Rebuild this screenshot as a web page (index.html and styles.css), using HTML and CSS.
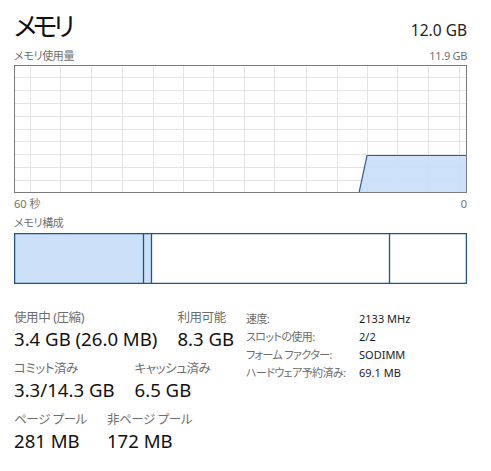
FILE: index.html
```html
<!DOCTYPE html>
<html lang="ja">
  <head>
    <meta charset="UTF-8" />
    <title>メモリ</title>
    <link rel="stylesheet" href="styles.css">
  </head>
  <body>
    <div class="page">
      <div class="header">
        <div class="title">メモリ</div>
        <div class="total">12.0 GB</div>
      </div>

      <div class="caption">
        <span>メモリ使用量</span>
        <span>11.9 GB</span>
      </div>
      <svg class="chart" width="453" height="128" viewBox="0 0 453 128">
        <g stroke="#e3e3e3" stroke-width="1">
          <line x1="16.5" y1="0" x2="16.5" y2="128" />
          <line x1="46.5" y1="0" x2="46.5" y2="128" />
          <line x1="77.5" y1="0" x2="77.5" y2="128" />
          <line x1="108.5" y1="0" x2="108.5" y2="128" />
          <line x1="139.5" y1="0" x2="139.5" y2="128" />
          <line x1="169.5" y1="0" x2="169.5" y2="128" />
          <line x1="199.5" y1="0" x2="199.5" y2="128" />
          <line x1="230.5" y1="0" x2="230.5" y2="128" />
          <line x1="260.5" y1="0" x2="260.5" y2="128" />
          <line x1="292.5" y1="0" x2="292.5" y2="128" />
          <line x1="323.5" y1="0" x2="323.5" y2="128" />
          <line x1="353.5" y1="0" x2="353.5" y2="128" />
          <line x1="383.5" y1="0" x2="383.5" y2="128" />
          <line x1="414.5" y1="0" x2="414.5" y2="128" />
          <line x1="445.5" y1="0" x2="445.5" y2="128" />
          <line x1="0" y1="12.5" x2="453" y2="12.5" />
          <line x1="0" y1="25.5" x2="453" y2="25.5" />
          <line x1="0" y1="38.5" x2="453" y2="38.5" />
          <line x1="0" y1="51.5" x2="453" y2="51.5" />
          <line x1="0" y1="64.5" x2="453" y2="64.5" />
          <line x1="0" y1="76.5" x2="453" y2="76.5" />
          <line x1="0" y1="89.5" x2="453" y2="89.5" />
          <line x1="0" y1="102.5" x2="453" y2="102.5" />
          <line x1="0" y1="115.5" x2="453" y2="115.5" />
        </g>
        <polygon points="345,128 353,90.5 453,90.5 453,128" fill="#c9defa" fill-opacity="0.9" />
        <polyline points="345,128 353,90.5 453,90.5" fill="none" stroke="#2a5f9e" stroke-width="1.2" />
        <rect x="0.5" y="0.5" width="452" height="127" fill="none" stroke="#7b7b7b" />
      </svg>
      <div class="axis">
        <span>60 秒</span>
        <span>0</span>
      </div>

      <div class="caption caption-bar">
        <span>メモリ構成</span>
      </div>
      <svg class="bar" width="453" height="51" viewBox="0 0 453 51">
        <rect x="0" y="0" width="137" height="51" fill="#cce0fa" />
        <g stroke="#1f5487" stroke-width="1.3">
          <line x1="129.5" y1="0" x2="129.5" y2="51" />
          <line x1="137.5" y1="0" x2="137.5" y2="51" />
          <line x1="375.5" y1="0" x2="375.5" y2="51" />
        </g>
        <rect x="0.6" y="0.6" width="451.8" height="49.8" fill="none" stroke="#1f5487" stroke-width="1.3" />
      </svg>

      <div class="stats">
        <div class="stats-main">
          <div class="stat-row">
            <div class="stat">
              <div class="stat-label">使用中 (圧縮)</div>
              <div class="stat-value">3.4 GB (26.0 MB)</div>
            </div>
            <div class="stat">
              <div class="stat-label">利用可能</div>
              <div class="stat-value">8.3 GB</div>
            </div>
          </div>
          <div class="stat-row">
            <div class="stat">
              <div class="stat-label">コミット済み</div>
              <div class="stat-value">3.3/14.3 GB</div>
            </div>
            <div class="stat">
              <div class="stat-label">キャッシュ済み</div>
              <div class="stat-value">6.5 GB</div>
            </div>
          </div>
          <div class="stat-row">
            <div class="stat">
              <div class="stat-label">ページ プール</div>
              <div class="stat-value">281 MB</div>
            </div>
            <div class="stat">
              <div class="stat-label">非ページ プール</div>
              <div class="stat-value">172 MB</div>
            </div>
          </div>
        </div>

        <div class="specs">
          <span class="spec-label">速度:</span>
          <span class="spec-value">2133 MHz</span>
          <span class="spec-label">スロットの使用:</span>
          <span class="spec-value">2/2</span>
          <span class="spec-label">フォーム ファクター:</span>
          <span class="spec-value">SODIMM</span>
          <span class="spec-label">ハードウェア予約済み:</span>
          <span class="spec-value">69.1 MB</span>
        </div>
      </div>
    </div>
  </body>
</html>
```

FILE: styles.css
```css
body {
  margin: 0;
  background: #ffffff;
  font-family: "Noto Sans", "Noto Sans CJK JP", sans-serif;
  font-feature-settings: "palt";
  color: #1a1a1a;
}
.page {
  width: 453px;
  padding: 9px 0 0 14px;
}
.header {
  display: flex;
  justify-content: space-between;
  align-items: baseline;
}
.title {
  font-size: 26px;
  line-height: 34px;
  letter-spacing: -4px;
  color: #111;
}
.total {
  font-size: 15.5px;
  line-height: 20px;
  color: #222;
}
.caption {
  display: flex;
  justify-content: space-between;
  margin-top: 5px;
  font-size: 11px;
  line-height: 15px;
  letter-spacing: -0.3px;
  color: #707070;
}
.chart {
  display: block;
  margin-top: 2px;
}
.axis {
  display: flex;
  justify-content: space-between;
  margin-top: 3px;
  font-size: 11px;
  line-height: 15px;
  color: #707070;
}
.caption-bar {
  margin-top: 4px;
}
.bar {
  display: block;
  margin-top: 3px;
}
.stats {
  display: flex;
  margin-top: 26px;
}
.stats-main {
  width: 232px;
}
.stat-row {
  display: flex;
  gap: 20px;
  height: 51px;
}
.stat-label {
  font-size: 12.5px;
  line-height: 16px;
  letter-spacing: -0.4px;
  color: #6d6d6d;
}
.stat-value {
  font-size: 18.6px;
  line-height: 26px;
  color: #111;
}
.specs {
  display: grid;
  grid-template-columns: 113px auto;
  grid-auto-rows: 18px;
  font-size: 11px;
  line-height: 18px;
  align-content: start;
}
.spec-label {
  letter-spacing: -0.6px;
  color: #6d6d6d;
}
.spec-value {
  color: #1a1a1a;
}
```
